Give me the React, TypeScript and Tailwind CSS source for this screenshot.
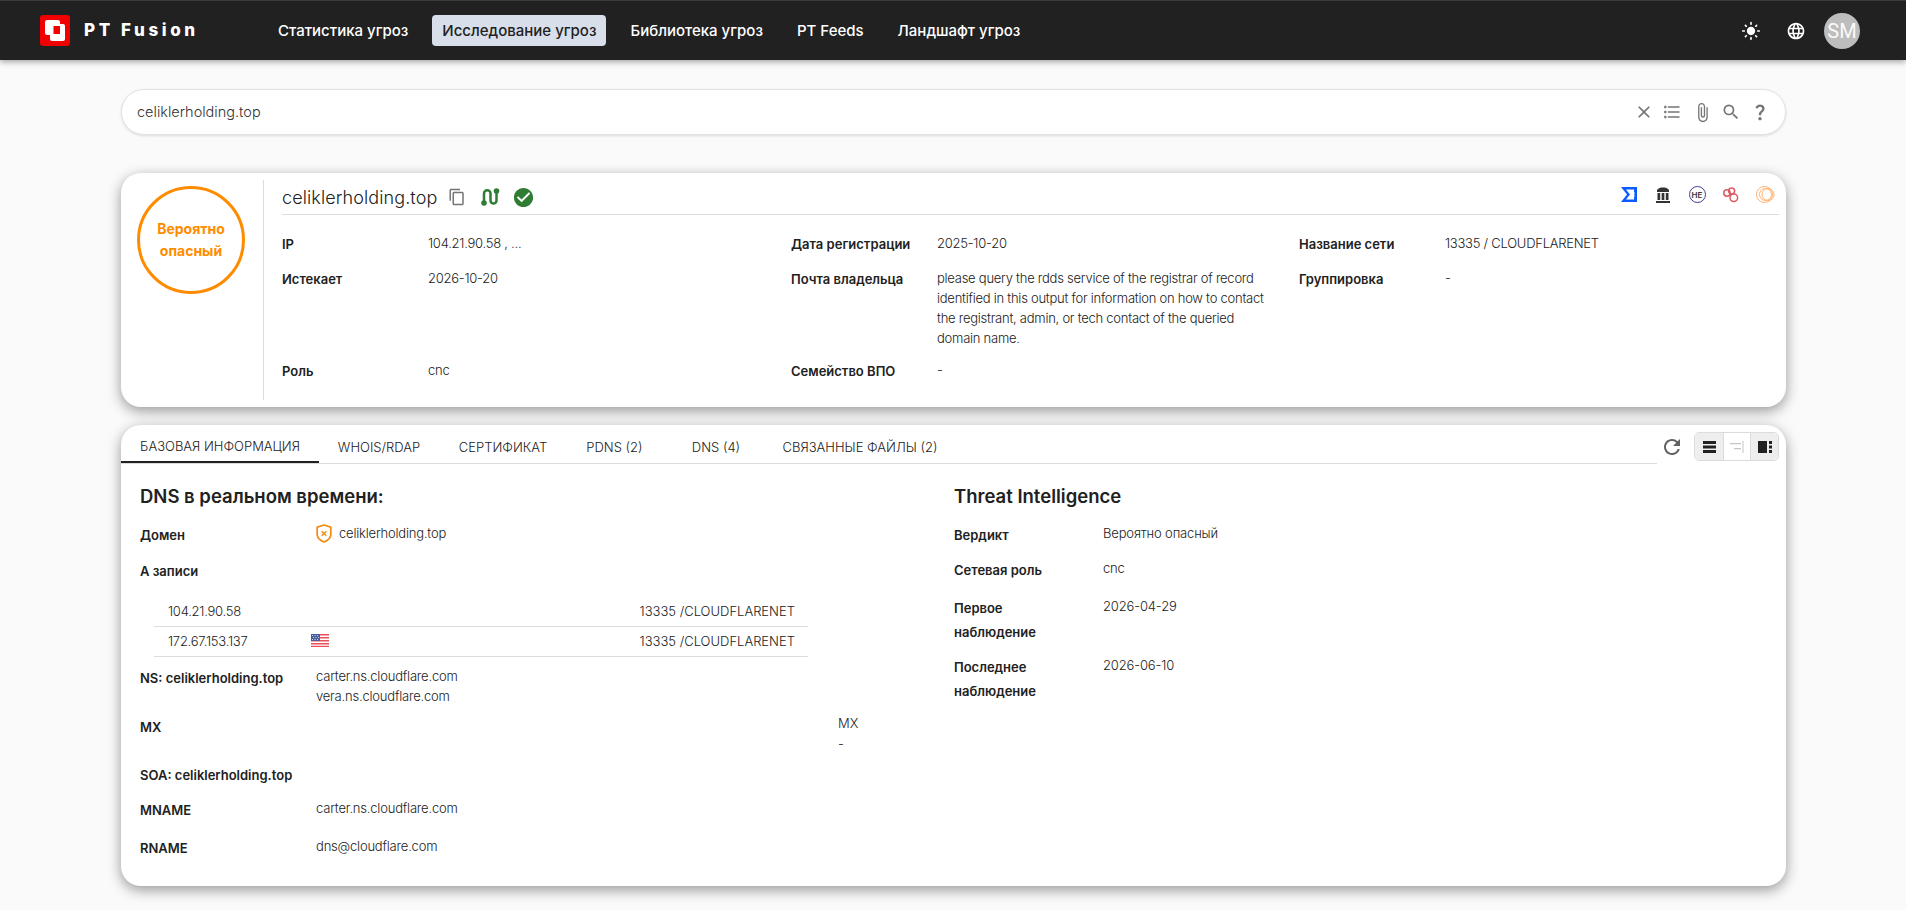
import {
  MdAttachFile,
  MdCheckCircle,
  MdClose,
  MdContentCopy,
  MdFormatListBulleted,
  MdLanguage,
  MdLightMode,
  MdQuestionMark,
  MdRefresh,
  MdSearch,
} from "react-icons/md";

const navItems = ["Статистика угроз", "Исследование угроз", "Библиотека угроз", "PT Feeds", "Ландшафт угроз"];

const tabs = [
  { label: "БАЗОВАЯ ИНФОРМАЦИЯ", width: "w-[198px]" },
  { label: "WHOIS/RDAP", width: "w-[120px]" },
  { label: "СЕРТИФИКАТ", width: "w-[128px]" },
  { label: "PDNS (2)", width: "w-[95px]" },
  { label: "DNS (4)", width: "w-[108px]" },
  { label: "СВЯЗАННЫЕ ФАЙЛЫ (2)", width: "w-[180px]" },
];

const Logo = () => (
  <svg width="30" height="31" viewBox="0 0 30 31">
    <rect width="30" height="31" rx="3" fill="#f00000" />
    <rect x="5" y="5" width="15" height="15" rx="2" fill="#fff" />
    <rect x="10" y="9" width="15" height="17" rx="2" fill="#fff" />
    <rect x="13.500" y="11" width="6.500" height="8" fill="#f00000" />
  </svg>
);

const RouteIcon = () => (
  <svg width="19" height="18" viewBox="0 0 19 18" fill="none" stroke="#2e7d32" strokeWidth="2.500" className="ml-[15px]">
    <path d="M3 14V5.500a3 3 0 0 1 6.500 0v7a3 3 0 0 0 6 0V3" />
    <circle cx="3" cy="15" r="2.800" fill="#2e7d32" stroke="none" />
    <circle cx="15.500" cy="3" r="2.800" fill="#2e7d32" stroke="none" />
  </svg>
);

const SigmaIcon = () => (
  <svg width="16" height="15" viewBox="0 0 16 15">
    <path d="M0 0h16v15H0l6-7.500z" fill="#0a5cff" />
    <path d="M5 2.600h8.400v9.800H5l4-4.900z" fill="#fff" />
    <path d="M13 2.600h3V5h-3zM13 10h3v2.400h-3z" fill="#0a5cff" />
  </svg>
);

const BankIcon = () => (
  <svg width="14" height="16" viewBox="0 0 14 16" fill="#333">
    <path d="M1 3C2.500 1 4.500 0.500 7 0.500s4.500.5 6 2.500v2H1zM0 14h14v2H0zM1.500 6h2.700v7H1.500zM5.650 6h2.700v7h-2.700zM9.800 6h2.700v7H9.800z" />
  </svg>
);

const HeIcon = () => (
  <span className="flex h-[17px] w-[17px] items-center justify-center rounded-full border border-[#3d3f8f] text-[8px] font-semibold text-[#333]">
    HE
  </span>
);

const RedCircles = () => (
  <svg width="16" height="16" viewBox="0 0 16 16" fill="none" stroke="#db5a63" strokeWidth="1.500">
    <circle cx="4" cy="6" r="3.200" />
    <circle cx="8.600" cy="4" r="3" />
    <circle cx="10.800" cy="10.800" r="3.800" />
  </svg>
);

const OrangeCircles = () => (
  <svg width="19" height="19" viewBox="0 0 19 19" fill="none" stroke="#ffb273" strokeWidth="1">
    <circle cx="8.500" cy="9.500" r="8" />
    <circle cx="9.500" cy="9.500" r="6" />
    <circle cx="12" cy="9.500" r="6" />
  </svg>
);

const ShieldIcon = () => (
  <svg width="16" height="19" viewBox="0 0 15 18" fill="none" stroke="#f28c0f" strokeWidth="1.600">
    <path d="M7.500 1 14 3v6.500c0 3.600-3 6.200-6.500 7.500C4 15.700 1 13.100 1 9.500V3z" />
    <path d="m5.300 6.800 4.400 4.400m0-4.400-4.400 4.400" strokeWidth="1.300" />
  </svg>
);

const UsFlag = () => (
  <svg width="18" height="13" viewBox="0 0 18 13" className="-mt-[2px]">
    <rect width="18" height="13" fill="#fff" />
    <path d="M0 0h18v1.500H0zM0 3h18v1.500H0zM0 6h18v1.500H0zM0 9h18v1.500H0zM0 11.800h18V13H0z" fill="#e8505b" />
    <rect width="9" height="7" fill="#4a5f9e" />
    <path d="M1 1h1v1H1zM3.500 1h1v1h-1zM6 1h1v1H6zM2 3h1v1H2zM4.500 3h1v1h-1zM7 3h1v1H7zM1 5h1v1H1zM3.500 5h1v1h-1zM6 5h1v1H6z" fill="#c9d2ea" />
  </svg>
);

const ListViewIcon = () => (
  <svg width="13" height="12" viewBox="0 0 13 12" fill="#212121">
    <path d="M0 0h13v3H0zM0 4.500h13v3H0zM0 9h13v3H0z" />
  </svg>
);

const SideViewIcon = () => (
  <svg width="14" height="12" viewBox="0 0 14 12" fill="#c4c4c4">
    <path d="M0 2h11v1.200H0zM4 7h7v1.200H4zM12.500 0h1v12h-1z" />
  </svg>
);

const SplitViewIcon = () => (
  <svg width="14" height="12" viewBox="0 0 14 12" fill="#212121">
    <path d="M0 0h9v12H0zM11 0h3v3h-3zM11 4.500h3v3h-3zM11 9h3v3h-3z" />
  </svg>
);

const InfoCell = ({ label, children }: { label: string; children: React.ReactNode }) => (
  <div className="flex">
    <div className="w-[146px] shrink-0 text-[13px] font-semibold leading-[20px] text-[#212121]">{label}</div>
    <div className="-mt-[1px] text-[13px] font-light leading-[20px] tracking-[-0.25px] text-[#212121]">{children}</div>
  </div>
);

const DetailRow = ({ label, className, children }: { label: string; className: string; children?: React.ReactNode }) => (
  <div className={`flex ${className}`}>
    <div className="w-[176px] shrink-0 text-[13px] font-semibold leading-[20px] text-[#212121]">{label}</div>
    <div className="-mt-[2px] text-[13px] font-light leading-[20px] tracking-[-0.2px] text-[#212121]">{children}</div>
  </div>
);

const TiRow = ({ label, className, children }: { label: React.ReactNode; className: string; children: React.ReactNode }) => (
  <div className={`flex ${className}`}>
    <div className="w-[149px] shrink-0 text-[13px] font-semibold leading-[24px] text-[#212121]">{label}</div>
    <div className="text-[13px] font-light leading-[20px] tracking-[-0.15px] text-[#212121]">{children}</div>
  </div>
);

const App = () => {
  return (
    <div className="min-h-screen bg-[#fafafa] font-['Inter',sans-serif]">
      <header className="flex h-[60px] items-center border-t border-[#3a3a3a] bg-[#212121] pl-[40px] pr-[46px] shadow-[0_2px_6px_rgba(0,0,0,0.35)]">
        <Logo />
        <span className="ml-[14px] w-[184px] text-[17px] font-extrabold tracking-[3.600px] text-white">PT Fusion</span>
        <nav className="flex gap-[14px]">
          {navItems.map((item, i) => (
            <span
              key={item}
              className={`flex h-[31px] items-center rounded-[4px] px-[10px] pt-[1px] text-[15px] font-medium ${
                i === 1 ? "bg-[#d8dfeb] text-[#212121]" : "text-white"
              }`}
            >
              {item}
            </span>
          ))}
        </nav>
        <div className="ml-auto flex items-center text-white">
          <MdLightMode size={20} />
          <MdLanguage size={20} className="ml-[25px]" />
          <span className="ml-[18px] flex h-[36px] w-[36px] items-center justify-center rounded-full bg-[#bdbdbd] font-['Roboto',sans-serif] text-[20px] text-[#fafafa]">
            SM
          </span>
        </div>
      </header>

      <main className="ml-[121px] w-[1665px]">
        <div className="mt-[29px] flex h-[46px] items-center rounded-full border border-[#e3e3e3] bg-white pl-[15px] pr-[15px] shadow-[0_1px_3px_rgba(0,0,0,0.12)]">
          <span className="text-[14.500px] font-light text-[#333]">celiklerholding.top</span>
          <div className="ml-auto flex items-center text-[#757575]">
            <MdClose size={20} />
            <MdFormatListBulleted size={20} className="ml-[8px]" />
            <MdAttachFile size={21} className="ml-[10px]" />
            <MdSearch size={20} className="ml-[8px]" />
            <MdQuestionMark size={20} className="ml-[9px]" />
          </div>
        </div>

        <section className="mt-[38px] flex h-[234px] rounded-[20px] bg-white shadow-[0_4px_14px_rgba(0,0,0,0.4)]">
          <div className="w-[142px] shrink-0 pl-[16px] pt-[13px]">
            <div className="flex h-[108px] w-[108px] items-center justify-center rounded-full border-[3px] border-[#ff8c00] text-center text-[14px] font-bold leading-[22px] text-[#ff8c00]">
              Вероятно
              <br />
              опасный
            </div>
          </div>
          <div className="my-[7px] flex-1 border-l border-[#dcdcdc] pl-[18px] pr-[7px]">
            <div className="flex h-[35px] items-center border-b border-[#dcdcdc]">
              <span className="text-[18px] font-light tracking-[0.1px] text-[#212121]">celiklerholding.top</span>
              <MdContentCopy size={18} className="ml-[11px] text-[#757575]" />
              <RouteIcon />
              <MdCheckCircle size={23} className="ml-[12px] text-[#2e7d32]" />
              <div className="-mr-[3px] -mt-[5px] ml-auto flex items-center">
                <span className="flex w-[34px] justify-center"><SigmaIcon /></span>
                <span className="flex w-[34px] justify-center"><BankIcon /></span>
                <span className="flex w-[34px] justify-center"><HeIcon /></span>
                <span className="flex w-[34px] justify-center"><RedCircles /></span>
                <span className="flex w-[34px] justify-center"><OrangeCircles /></span>
              </div>
            </div>
            <div className="mt-[19px] grid grid-cols-[509px_508px_1fr] grid-rows-[35px_92px_auto]">
              <InfoCell label="IP">104.21.90.58 , ...</InfoCell>
              <InfoCell label="Дата регистрации">2025-10-20</InfoCell>
              <InfoCell label="Название сети">13335 / CLOUDFLARENET</InfoCell>
              <InfoCell label="Истекает">2026-10-20</InfoCell>
              <InfoCell label="Почта владельца">
                <div className="w-[335px]">
                  please query the rdds service of the registrar of record identified in this output for information on how to contact the registrant, admin, or tech contact of the queried domain name.
                </div>
              </InfoCell>
              <InfoCell label="Группировка">-</InfoCell>
              <InfoCell label="Роль">cnc</InfoCell>
              <InfoCell label="Семейство ВПО">-</InfoCell>
            </div>
          </div>
        </section>

        <section className="mt-[18px] h-[461px] rounded-[20px] bg-white shadow-[0_4px_14px_rgba(0,0,0,0.4)]">
          <div className="flex h-[39px] items-start pr-[7px]">
            <div className="flex h-[39px] w-[1536px] border-b border-[#dcdcdc]">
              {tabs.map((tab, i) => (
                <span
                  key={tab.label}
                  className={`flex h-[38px] items-center justify-center pt-[7px] text-[13px] font-light text-[#212121] ${tab.width} ${
                    i === 0 ? "border-b-2 border-[#212121]" : ""
                  }`}
                >
                  {tab.label}
                </span>
              ))}
            </div>
            <MdRefresh size={24} className="ml-[3px] mt-[10px] text-[#616161]" />
            <div className="ml-[10px] mt-[7px] flex h-[29px] w-[85px] overflow-hidden rounded-[5px] border border-[#dcdcdc]">
              <span className="flex w-[28px] items-center justify-center bg-[#eeeeee]">
                <ListViewIcon />
              </span>
              <span className="flex w-[28px] items-center justify-center border-x border-[#dcdcdc]">
                <SideViewIcon />
              </span>
              <span className="flex flex-1 items-center justify-center bg-[#eeeeee]">
                <SplitViewIcon />
              </span>
            </div>
          </div>

          <div className="flex pl-[19px] pt-[20px]">
            <div className="w-[814px] shrink-0">
              <h2 className="text-[18.500px] font-semibold leading-[24px] text-[#212121]">DNS в реальном времени:</h2>
              <DetailRow label="Домен" className="mt-[17px]">
                <span className="flex items-center gap-[7px]">
                  <ShieldIcon />
                  celiklerholding.top
                </span>
              </DetailRow>
              <DetailRow label="А записи" className="mt-[16px]" />
              <div className="ml-[14px] mt-[16px] w-[654px] text-[13px] font-light text-[#212121]">
                <div className="flex h-[30px] items-center border-b border-[#dcdcdc] pl-[14px]">
                  <span className="w-[143px] tracking-[-0.25px]">104.21.90.58</span>
                  <span className="ml-auto pr-[13px]">13335 /CLOUDFLARENET</span>
                </div>
                <div className="flex h-[30px] items-center border-b border-[#dcdcdc] pl-[14px]">
                  <span className="w-[143px] tracking-[-0.25px]">172.67.153.137</span>
                  <UsFlag />
                  <span className="ml-auto pr-[13px]">13335 /CLOUDFLARENET</span>
                </div>
              </div>
              <DetailRow label="NS: celiklerholding.top" className="mt-[11px]">
                carter.ns.cloudflare.com
                <br />
                vera.ns.cloudflare.com
              </DetailRow>
              <div className="mt-[7px] flex h-[46px]">
                <div className="w-[698px] pt-[4px] text-[13px] font-semibold leading-[20px] text-[#212121]">MX</div>
                <div className="text-[13px] font-light leading-[21px] text-[#212121]">
                  MX
                  <br />-
                </div>
              </div>
              <DetailRow label="SOA: celiklerholding.top" className="mt-[6px]" />
              <DetailRow label="MNAME" className="mt-[15px]">
                carter.ns.cloudflare.com
              </DetailRow>
              <DetailRow label="RNAME" className="mt-[18px]">
                dns@cloudflare.com
              </DetailRow>
            </div>
            <div className="flex-1">
              <h2 className="text-[18.500px] font-semibold leading-[24px] text-[#212121]">Threat Intelligence</h2>
              <TiRow label="Вердикт" className="mt-[15px]">
                Вероятно опасный
              </TiRow>
              <TiRow label="Сетевая роль" className="mt-[11px]">
                cnc
              </TiRow>
              <TiRow
                label={
                  <>
                    Первое
                    <br />
                    наблюдение
                  </>
                }
                className="mt-[14px]"
              >
                2026-04-29
              </TiRow>
              <TiRow
                label={
                  <>
                    Последнее
                    <br />
                    наблюдение
                  </>
                }
                className="mt-[11px]"
              >
                2026-06-10
              </TiRow>
            </div>
          </div>
        </section>
      </main>
    </div>
  );
};

export default App;
